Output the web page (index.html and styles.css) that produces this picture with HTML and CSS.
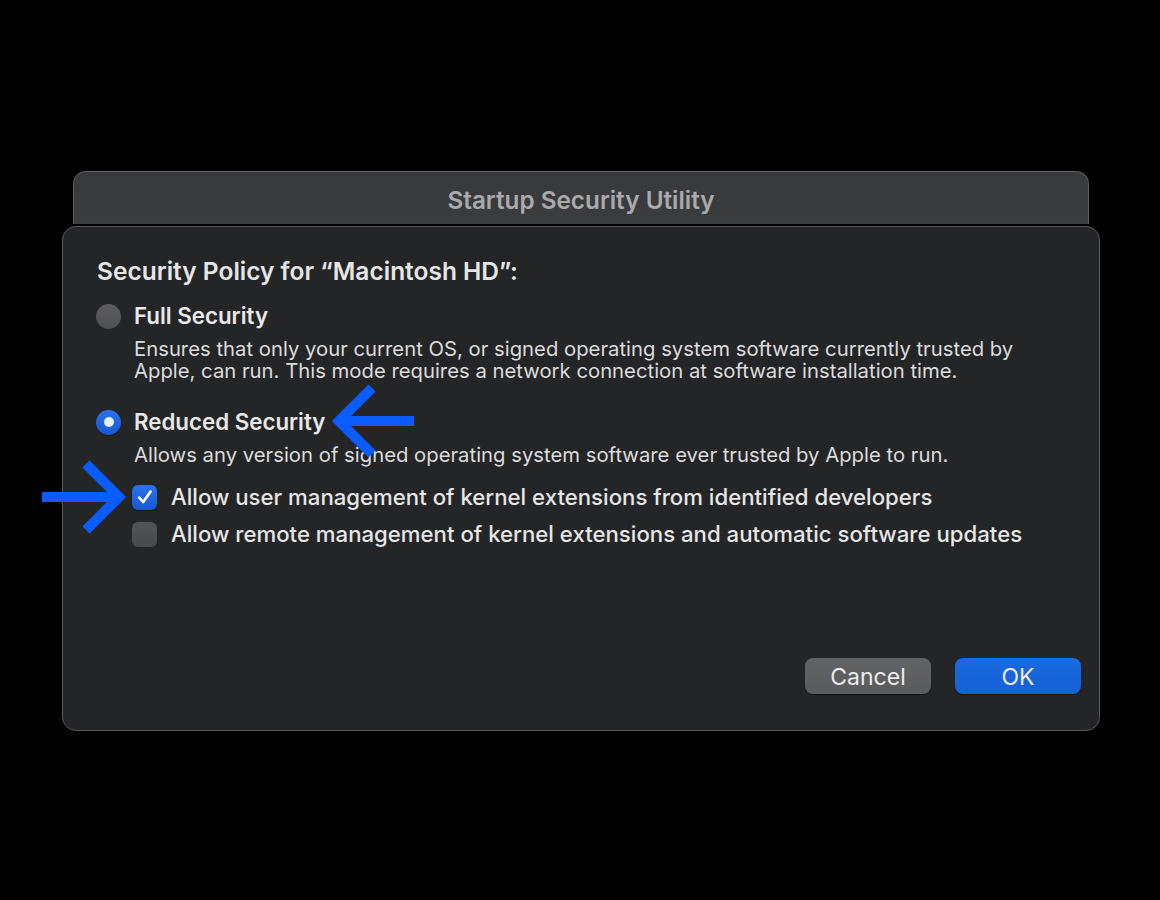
FILE: index.html
```html
<!DOCTYPE html>
<html>
<head>
<meta charset="utf-8">
<link rel="stylesheet" href="styles.css">
</head>
<body>
<div class="stage">
  <div class="backwin"><div class="wintitle">Startup Security Utility</div></div>
  <div class="dialog">
    <div class="heading">Security Policy for “Macintosh HD”:</div>
    <div class="option first">
      <span class="radio"></span>
      <span class="optlabel">Full Security</span>
    </div>
    <div class="desc desc1">
      <div class="line">Ensures that only your current OS, or signed operating system software currently trusted by</div>
      <div class="line">Apple, can run. This mode requires a network connection at software installation time.</div>
    </div>
    <div class="option second">
      <span class="radio on"><span class="dot"></span></span>
      <span class="optlabel">Reduced Security</span>
    </div>
    <div class="desc desc2"><div class="line">Allows any version of signed operating system software ever trusted by Apple to run.</div></div>
    <div class="check cb1">
      <span class="box on"><svg viewBox="0 0 24 24" width="24" height="24"><path d="M6.2 12.6 L10.2 17 L17.6 6.6" fill="none" stroke="#fff" stroke-width="2.6" stroke-linecap="round" stroke-linejoin="round"/></svg></span>
      <span class="cblabel">Allow user management of kernel extensions from identified developers</span>
    </div>
    <div class="check cb2">
      <span class="box"></span>
      <span class="cblabel">Allow remote management of kernel extensions and automatic software updates</span>
    </div>
    <div class="buttons">
      <div class="btn cancel">Cancel</div>
      <div class="btn ok">OK</div>
    </div>
  </div>
  <svg class="arrows" width="1160" height="900" viewBox="0 0 1160 900">
    <g fill="none" stroke="#0a5cff" stroke-width="10" stroke-linecap="butt" stroke-linejoin="miter">
      <path d="M414 421 H339"/>
      <path d="M372 388 L339 421 L372 454"/>
      <path d="M42 497 H116"/>
      <path d="M86 464 L119 497 L86 530"/>
    </g>
  </svg>
</div>
</body>
</html>
```
FILE: styles.css
```css
html, body {
  margin: 0;
  padding: 0;
  background: #000;
}
body {
  width: 1160px;
  height: 900px;
  overflow: hidden;
  font-family: Inter, "Helvetica Neue", Arial, sans-serif;
}
.stage {
  position: relative;
  width: 1160px;
  height: 900px;
  padding-top: 171px;
  box-sizing: border-box;
}
.backwin {
  margin-left: 73px;
  width: 1016px;
  height: 53px;
  box-sizing: border-box;
  border: 1.5px solid #5e5f61;
  border-bottom: none;
  border-radius: 13px 13px 0 0;
  background: linear-gradient(#38393b, #3b3c3e);
  display: flex;
  justify-content: center;
  padding-top: 13px;
}
.wintitle {
  color: #a9aaab;
  font-size: 24.3px;
  font-weight: 600;
  line-height: 30px;
}
.dialog {
  margin-top: 2px;
  margin-left: 62px;
  width: 1038px;
  height: 505px;
  box-sizing: border-box;
  border: 1.5px solid #58595b;
  border-radius: 14px;
  background: #242527;
  padding: 30px 18px 36px 34px;
  display: flex;
  flex-direction: column;
  color: #e4e4e4;
}
.heading {
  font-size: 24.5px;
  font-weight: 600;
  line-height: 28px;
  color: #e6e6e6;
}
.option {
  display: flex;
  align-items: center;
  height: 28px;
}
.option.first { margin-top: 17px; }
.option.second { margin-top: 26px; }
.radio {
  width: 25px;
  height: 25px;
  border-radius: 50%;
  background: linear-gradient(#5c5c5e, #4f5052);
  margin-right: 13px;
  margin-left: -1px;
  display: flex;
  align-items: center;
  justify-content: center;
  flex: none;
}
.radio.on {
  background: linear-gradient(#2a73ec, #1758cf);
  box-shadow: 0 1px 1px rgba(0,0,0,0.4);
}
.dot {
  width: 10px;
  height: 10px;
  border-radius: 50%;
  background: #e6eeff;
}
.optlabel {
  font-size: 22.3px;
  font-weight: 600;
  line-height: 28px;
  color: #e8e8e8;
}
.desc {
  margin-left: 37px;
  font-size: 20.3px;
  color: #dcdcdc;
  display: flex;
  flex-direction: column;
}
.line {
  height: 22px;
  line-height: 22px;
  white-space: nowrap;
}
.desc1 { margin-top: 8px; }
.desc2 { margin-top: 8px; }
.check {
  display: flex;
  align-items: center;
  height: 28px;
  margin-left: 35px;
}
.cb1 { margin-top: 17px; }
.cb2 { margin-top: 9px; }
.box {
  width: 25px;
  height: 25px;
  border-radius: 6px;
  background: linear-gradient(#535456, #48494b);
  margin-right: 14px;
  flex: none;
  display: flex;
  align-items: center;
  justify-content: center;
}
.box.on {
  background: linear-gradient(#2a73ec, #1758cf);
  box-shadow: 0 1px 1px rgba(0,0,0,0.4);
}
.cblabel {
  font-size: 22.2px;
  font-weight: 500;
  line-height: 28px;
  color: #e6e6e6;
}
.buttons {
  margin-top: auto;
  display: flex;
  justify-content: flex-end;
  gap: 24px;
}
.btn {
  width: 126px;
  height: 36px;
  border-radius: 8px;
  display: flex;
  align-items: center;
  justify-content: center;
  font-size: 23px;
  line-height: 28px;
  padding-top: 1px;
  color: #ececec;
  box-sizing: border-box;
}
.cancel {
  background: linear-gradient(#626365, #5a5b5d);
  box-shadow: 0 1px 1px rgba(0,0,0,0.5);
}
.ok {
  background: linear-gradient(#1a6ae0, #1560d6);
  box-shadow: 0 1px 1px rgba(0,0,0,0.5);
}
.arrows {
  position: absolute;
  left: 0;
  top: 0;
  pointer-events: none;
}
```
